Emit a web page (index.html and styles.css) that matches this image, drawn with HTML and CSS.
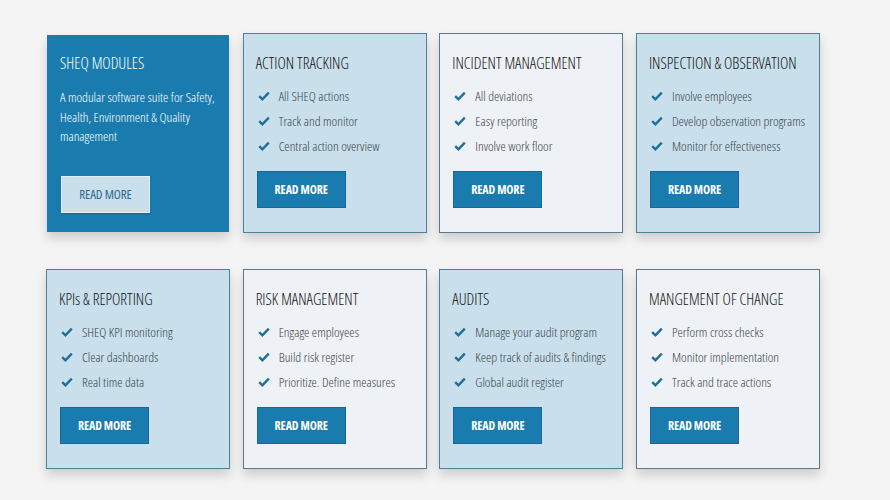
FILE: index.html
```
<!DOCTYPE html>
<html lang="en">
<head>
<meta charset="utf-8">
<title>SHEQ Modules</title>
<link rel="stylesheet" href="styles.css">
</head>
<body>
<main class="grid">
  <section class="card card-intro">
    <h2 class="card-title">SHEQ MODULES</h2>
    <p class="intro-text">A modular software suite for Safety, Health, Environment &amp; Quality management</p>
    <a class="btn btn-light" href="#">READ MORE</a>
  </section>

  <section class="card card-blue">
    <h2 class="card-title">ACTION TRACKING</h2>
    <ul class="checks">
      <li><svg class="tick" viewBox="0 0 12 10"><path d="M1.2 5.2 L4.4 8.3 L10.8 1.6"/></svg>All SHEQ actions</li>
      <li><svg class="tick" viewBox="0 0 12 10"><path d="M1.2 5.2 L4.4 8.3 L10.8 1.6"/></svg>Track and monitor</li>
      <li><svg class="tick" viewBox="0 0 12 10"><path d="M1.2 5.2 L4.4 8.3 L10.8 1.6"/></svg>Central action overview</li>
    </ul>
    <a class="btn" href="#">READ MORE</a>
  </section>

  <section class="card card-gray">
    <h2 class="card-title">INCIDENT MANAGEMENT</h2>
    <ul class="checks">
      <li><svg class="tick" viewBox="0 0 12 10"><path d="M1.2 5.2 L4.4 8.3 L10.8 1.6"/></svg>All deviations</li>
      <li><svg class="tick" viewBox="0 0 12 10"><path d="M1.2 5.2 L4.4 8.3 L10.8 1.6"/></svg>Easy reporting</li>
      <li><svg class="tick" viewBox="0 0 12 10"><path d="M1.2 5.2 L4.4 8.3 L10.8 1.6"/></svg>Involve work floor</li>
    </ul>
    <a class="btn" href="#">READ MORE</a>
  </section>

  <section class="card card-blue">
    <h2 class="card-title">INSPECTION &amp; OBSERVATION</h2>
    <ul class="checks">
      <li><svg class="tick" viewBox="0 0 12 10"><path d="M1.2 5.2 L4.4 8.3 L10.8 1.6"/></svg>Involve employees</li>
      <li><svg class="tick" viewBox="0 0 12 10"><path d="M1.2 5.2 L4.4 8.3 L10.8 1.6"/></svg>Develop observation programs</li>
      <li><svg class="tick" viewBox="0 0 12 10"><path d="M1.2 5.2 L4.4 8.3 L10.8 1.6"/></svg>Monitor for effectiveness</li>
    </ul>
    <a class="btn" href="#">READ MORE</a>
  </section>

  <section class="card card-blue">
    <h2 class="card-title">KPIs &amp; REPORTING</h2>
    <ul class="checks">
      <li><svg class="tick" viewBox="0 0 12 10"><path d="M1.2 5.2 L4.4 8.3 L10.8 1.6"/></svg>SHEQ KPI monitoring</li>
      <li><svg class="tick" viewBox="0 0 12 10"><path d="M1.2 5.2 L4.4 8.3 L10.8 1.6"/></svg>Clear dashboards</li>
      <li><svg class="tick" viewBox="0 0 12 10"><path d="M1.2 5.2 L4.4 8.3 L10.8 1.6"/></svg>Real time data</li>
    </ul>
    <a class="btn" href="#">READ MORE</a>
  </section>

  <section class="card card-gray">
    <h2 class="card-title">RISK MANAGEMENT</h2>
    <ul class="checks">
      <li><svg class="tick" viewBox="0 0 12 10"><path d="M1.2 5.2 L4.4 8.3 L10.8 1.6"/></svg>Engage employees</li>
      <li><svg class="tick" viewBox="0 0 12 10"><path d="M1.2 5.2 L4.4 8.3 L10.8 1.6"/></svg>Build risk register</li>
      <li><svg class="tick" viewBox="0 0 12 10"><path d="M1.2 5.2 L4.4 8.3 L10.8 1.6"/></svg>Prioritize. Define measures</li>
    </ul>
    <a class="btn" href="#">READ MORE</a>
  </section>

  <section class="card card-blue">
    <h2 class="card-title">AUDITS</h2>
    <ul class="checks">
      <li><svg class="tick" viewBox="0 0 12 10"><path d="M1.2 5.2 L4.4 8.3 L10.8 1.6"/></svg>Manage your audit program</li>
      <li><svg class="tick" viewBox="0 0 12 10"><path d="M1.2 5.2 L4.4 8.3 L10.8 1.6"/></svg>Keep track of audits &amp; findings</li>
      <li><svg class="tick" viewBox="0 0 12 10"><path d="M1.2 5.2 L4.4 8.3 L10.8 1.6"/></svg>Global audit register</li>
    </ul>
    <a class="btn" href="#">READ MORE</a>
  </section>

  <section class="card card-gray">
    <h2 class="card-title">MANGEMENT OF CHANGE</h2>
    <ul class="checks">
      <li><svg class="tick" viewBox="0 0 12 10"><path d="M1.2 5.2 L4.4 8.3 L10.8 1.6"/></svg>Perform cross checks</li>
      <li><svg class="tick" viewBox="0 0 12 10"><path d="M1.2 5.2 L4.4 8.3 L10.8 1.6"/></svg>Monitor implementation</li>
      <li><svg class="tick" viewBox="0 0 12 10"><path d="M1.2 5.2 L4.4 8.3 L10.8 1.6"/></svg>Track and trace actions</li>
    </ul>
    <a class="btn" href="#">READ MORE</a>
  </section>
</main>
</body>
</html>
```
FILE: styles.css
```
html, body {
  margin: 0;
  padding: 0;
  background: #f4f4f5;
}

body {
  font-family: "Open Sans", "Liberation Sans", sans-serif;
  font-stretch: 75%;
  color: #2b2b2b;
  width: 890px;
  height: 500px;
  overflow: hidden;
}

.grid {
  display: grid;
  grid-template-columns: repeat(4, 184px);
  grid-auto-rows: 200px;
  column-gap: 12.67px;
  row-gap: 36px;
  padding: 33px 0 0 46px;
}

.card {
  box-sizing: border-box;
  border: 1px solid #4f8199;
  box-shadow: 0 6px 10px rgba(0, 0, 0, 0.16);
  padding: 19px 10px 0 12px;
  display: flex;
  flex-direction: column;
  align-items: flex-start;
}

.card-blue {
  background: #c9e0ec;
  border-color: #4d8099;
}

.card-gray {
  background: #eef2f6;
  border-color: #5e7889;
}

.card-intro {
  background: #1a7cae;
  border-color: #1a7cae;
  margin: 2px 1px 1px 1px;
  padding: 17px 4px 0 12px;
  color: #ffffff;
}

.card-title {
  margin: 0;
  font-size: 15.8px;
  line-height: 20px;
  font-weight: 350;
  color: #111111;
  white-space: nowrap;
}

.card-intro .card-title {
  color: #ffffff;
}

.intro-text {
  margin: 15px 0 0 0;
  font-size: 13.4px;
  line-height: 19.5px;
  font-weight: 350;
  color: #ffffff;
}

.checks {
  list-style: none;
  margin: 10px 0 0 0;
  padding: 0 0 0 2px;
}

.checks li {
  display: flex;
  align-items: center;
  height: 25px;
  font-size: 13.4px;
  font-weight: 300;
  color: #3a4248;
  white-space: nowrap;
}

.tick {
  width: 12px;
  height: 10px;
  margin-right: 9px;
  flex: none;
}

.tick path {
  fill: none;
  stroke: #1f6f9b;
  stroke-width: 2.4;
  stroke-linecap: butt;
  stroke-linejoin: miter;
}

.btn {
  box-sizing: border-box;
  display: flex;
  align-items: center;
  justify-content: center;
  width: 89px;
  height: 37px;
  margin: 13px 0 0 1px;
  background: #1a7cae;
  border: 1px solid #17689a;
  color: #ffffff;
  font-size: 12px;
  font-weight: 700;
  text-decoration: none;
  letter-spacing: -0.1px;
}

.btn-light {
  margin: 29px 0 0 1px;
  background: #c9e0ec;
  border: 1px solid #e4eef4;
  color: #2a6a93;
  font-weight: 400;
  font-size: 13px;
  box-shadow: 0 1px 2px rgba(0, 0, 0, 0.15);
}
```
